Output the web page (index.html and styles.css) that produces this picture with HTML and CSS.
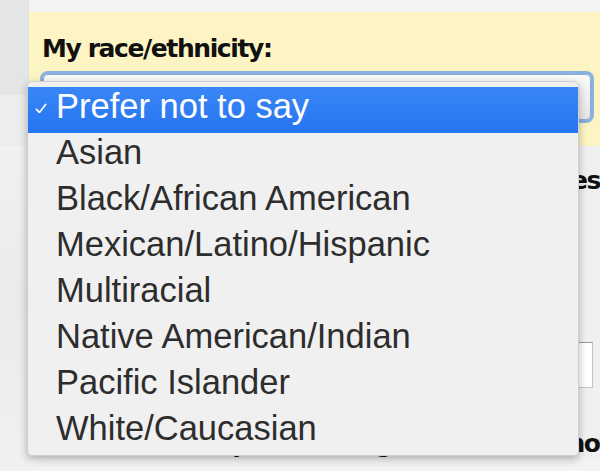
FILE: index.html
```html
<!DOCTYPE html>
<html lang="en">
<head>
    <meta charset="UTF-8">
    <meta name="viewport" content="width=device-width, initial-scale=1.0">
    <title>About Me</title>
    <link rel="stylesheet" href="styles.css">
</head>
<body>
    <div class="page">
        <div class="side"></div>
        <div class="content">
            <div class="panel">
                <label class="field-label" for="race">My race/ethnicity:</label>
                <div class="select-box" id="race"></div>
            </div>
            <div class="rest">
                <div class="field-label">Do you have any sisters who attend classes</div>
                <div class="text-input"></div>
                <div class="field-label">Is this student part of the gifted circle or not</div>
            </div>
        </div>

        <ul class="menu">
            <li class="item selected">
                <svg class="check" width="12" height="11" viewBox="0 0 12 11">
                    <path d="M1.4 6.4 L4.4 9.4 L10.6 1.4" fill="none" stroke="#fff" stroke-width="1.7" stroke-linecap="round" stroke-linejoin="round"/>
                </svg>
                Prefer not to say
            </li>
            <li class="item">Asian</li>
            <li class="item">Black/African American</li>
            <li class="item">Mexican/Latino/Hispanic</li>
            <li class="item">Multiracial</li>
            <li class="item">Native American/Indian</li>
            <li class="item">Pacific Islander</li>
            <li class="item">White/Caucasian</li>
        </ul>
    </div>
</body>
</html>
```

FILE: styles.css
```css
html, body {
    margin: 0;
    padding: 0;
    overflow: hidden;
}
body {
    width: 600px;
    height: 471px;
    background-color: #f0f0f0;
}
.page {
    position: relative;
    display: flex;
    height: 471px;
}
.side {
    width: 29px;
    flex-shrink: 0;
    background: linear-gradient(to bottom, #e4e5e7 0, #e4e5e7 95px, #ededee 95px, #ededee 146px, #f1f1f1 146px, #ebebeb 300px, #f1f1f1 471px);
}
.content {
    flex: 1;
    min-width: 0;
    padding-top: 12px;
    background-color: #f3f3f3;
}
.panel {
    background-color: #fdf4c4;
    padding: 22px 0 26px 13px;
}
.field-label {
    display: block;
    font-family: "DejaVu Sans", sans-serif;
    font-weight: bold;
    font-size: 25px;
    line-height: 30px;
    letter-spacing: -1.4px;
    color: #111;
    margin-bottom: 10px;
    white-space: nowrap;
}
.select-box {
    width: 546px;
    height: 44px;
    margin-left: 1px;
    border: 1px solid #8aa9d8;
    border-radius: 5px;
    background: linear-gradient(to bottom, #fbfbfb, #e6e6e6);
    box-shadow: 0 0 0 3px rgba(98, 155, 235, 0.75);
}
.rest {
    background-color: #f0f0f0;
    padding: 20px 0 0 13px;
}
.text-input {
    width: 549px;
    height: 44px;
    margin-top: 146px;
    margin-bottom: 41px;
    background-color: #fff;
    border: 1px solid #c4c4c4;
    border-top-color: #9a9a9a;
}
.menu {
    position: absolute;
    left: 27px;
    top: 81px;
    width: 550px;
    margin: 0;
    padding: 5px 0 0;
    list-style: none;
    background-color: #f0f0f0;
    border: 1px solid #cfcfcf;
    border-radius: 5px;
    box-shadow: 0 3px 9px rgba(0, 0, 0, 0.28);
}
.item {
    position: relative;
    height: 38px;
    padding: 0 0 8px 28px;
    font-family: "Liberation Sans", Arial, sans-serif;
    font-size: 34.5px;
    line-height: 38px;
    color: #2d2d2d;
}
.item.selected {
    background: linear-gradient(to bottom, #3a86f6, #2575f1);
    color: #fff;
}
.check {
    position: absolute;
    left: 7px;
    top: 16px;
}
```
